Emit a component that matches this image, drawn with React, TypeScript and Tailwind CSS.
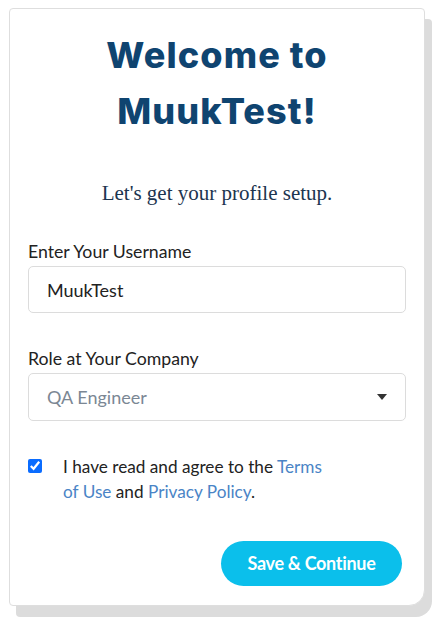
import React, { useState } from 'react';

export default function App() {
  const [username, setUsername] = useState('MuukTest');
  const [role, setRole] = useState('');
  const [agree, setAgree] = useState(true);

  return (
    <div className="min-h-screen bg-white pl-[9px] pr-[10px] pt-2 font-['Lato',sans-serif]">
      <div className="flex h-[598px] w-[416px] flex-col rounded-[4px] rounded-br-[16px] border border-[#dedede] bg-white px-[18px] shadow-[7px_11px_0_#dcdcdc]">
        <h1 className="mt-[18px] text-center font-['Inter',sans-serif] text-[36px] font-extrabold leading-[56px] tracking-[1.1px] text-[#0f4470]">
          Welcome to
          <br />
          MuukTest!
        </h1>
        <p className="mt-[42px] text-center font-['Liberation_Serif',serif] text-[21px] leading-6 text-[#1c3550]">
          Let&apos;s get your profile setup.
        </p>

        <form className="mt-[35px] flex flex-col">
          <label htmlFor="username" className="mb-[2px] block text-[17.7px] leading-6 text-[#222]">
            Enter Your Username
          </label>
          <input
            id="username"
            type="text"
            value={username}
            onChange={(e) => setUsername(e.target.value)}
            className="h-[47px] w-full rounded-[5px] border border-[#dcdcdc] px-[18px] text-[18px] text-[#222] outline-none"
          />

          <label htmlFor="role" className="mb-[2px] mt-[34px] block text-[17.7px] leading-6 text-[#222]">
            Role at Your Company
          </label>
          <div className="relative">
            <select
              id="role"
              value={role}
              onChange={(e) => setRole(e.target.value)}
              className="h-[48px] w-full appearance-none rounded-[5px] border border-[#dcdcdc] bg-white px-[18px] text-[18px] text-[#7b8794] outline-none"
            >
              <option value="">QA Engineer</option>
              <option value="dev">Developer</option>
              <option value="manager">Manager</option>
            </select>
            <svg
              className="pointer-events-none absolute right-[19px] top-1/2 -translate-y-1/2"
              width="10"
              height="6"
              viewBox="0 0 10 6"
            >
              <path d="M0 0h10L5 6z" fill="#333" />
            </svg>
          </div>

          <div className="mt-[33px] flex items-start">
            <input
              type="checkbox"
              checked={agree}
              onChange={(e) => setAgree(e.target.checked)}
              className="mt-[5px] h-[14px] w-[14px] accent-[#0a6cff]"
            />
            <p className="ml-[21px] w-[270px] text-[17.2px] leading-[25px] text-[#222]">
              I have read and agree to the <a className="text-[#4a84c6]">Terms of Use</a> and{' '}
              <a className="text-[#4a84c6]">Privacy Policy</a>.
            </p>
          </div>

          <div className="mt-[37px] flex justify-end pr-[4px]">
            <button
              type="button"
              className="h-[45px] w-[181px] rounded-full bg-[#0bbfeb] text-[18px] font-bold tracking-[-0.3px] text-white"
            >
              Save &amp; Continue
            </button>
          </div>
        </form>
      </div>
    </div>
  );
}
